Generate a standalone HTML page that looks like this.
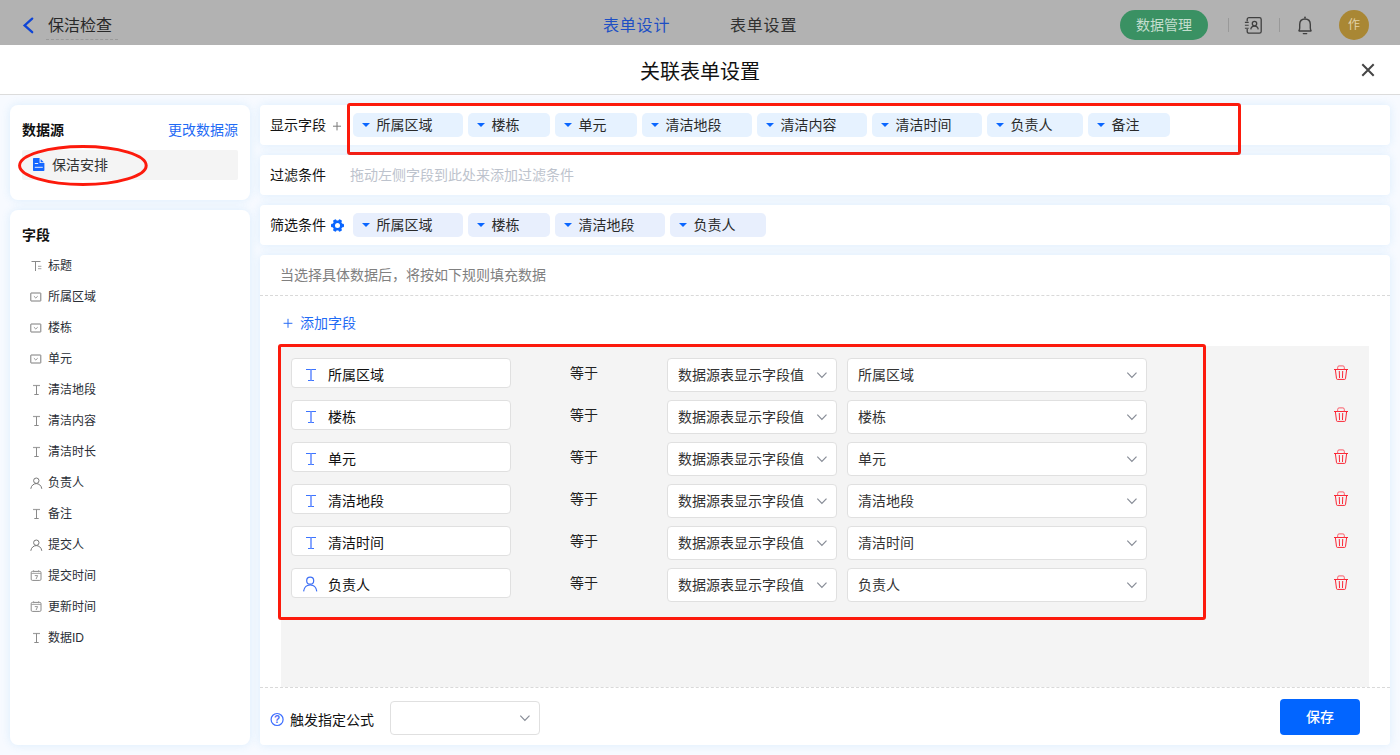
<!DOCTYPE html>
<html lang="zh-CN">
<head>
<meta charset="utf-8">
<title>关联表单设置</title>
<style>
*{box-sizing:border-box;margin:0;padding:0}
html,body{width:1400px;height:755px;overflow:hidden}
body{position:relative;background:#f7faff;font-family:"Liberation Sans", "Noto Sans CJK SC", sans-serif;font-size:14px;color:#141414;line-height:1}
.abs{position:absolute}
.t{position:absolute;white-space:nowrap;line-height:20px;height:20px}
#hdr{left:0;top:0;width:1400px;height:45px;background:#b2b2b2}
#ttl{left:0;top:45px;width:1400px;height:50px;background:#fff;border-bottom:1px solid #dcdcdc}
.card{position:absolute;background:#fff;border-radius:8px;box-shadow:0 0 10px rgba(47,157,235,0.14)}
.chip{position:absolute;height:24px;border-radius:5px;background:#e6f2ff;top:8px}
.chip.f{background:#e8effd}
.chip i{position:absolute;left:8.7px;top:10px;width:0;height:0;border-left:4.4px solid transparent;border-right:4.4px solid transparent;border-top:4.7px solid #0a66ff}
.chip span{position:absolute;left:23.6px;top:2px;line-height:20px;font-size:14px;color:#2a2a2a;white-space:nowrap}
.fi{position:absolute;left:48px;font-size:12px;line-height:16px;height:16px;color:#2a2e36;white-space:nowrap}
.ic{position:absolute;left:30px;width:13px;height:13px}
.box{position:absolute;background:#fff;border:1px solid #e0e0e0;border-radius:4px}
.box span{position:absolute;top:6px;line-height:20px;font-size:14px;color:#111;white-space:nowrap}
.sel span{top:6px;left:10px;color:#333}
.sel svg{position:absolute;right:8.5px;top:12.4px}
</style>
</head>
<body>
<div class="abs" id="hdr"></div>
<svg class="abs" style="left:21px;top:16px" width="14" height="18" viewBox="0 0 14 18"><path d="M11.2 2.6 L3.6 9.4 L11.2 16.2" fill="none" stroke="#0f45d6" stroke-width="2.3" stroke-linecap="round"/></svg>
<div class="t" style="left:48px;top:15px;font-size:16px;color:#292929;border-bottom:1px dashed #9a9a9a;height:25px;line-height:21px;padding-right:6px;margin-left:-2px;padding-left:2px">保洁检查</div>
<div class="t" style="left:603px;top:16px;font-size:16px;letter-spacing:0.8px;color:#1d4fc4">表单设计</div>
<div class="t" style="left:730px;top:16px;font-size:16px;letter-spacing:0.8px;color:#303030">表单设置</div>
<div class="abs" style="left:1120px;top:10px;width:88px;height:30px;border-radius:15px;background:#3a9163;color:#c4dece;font-size:14px;line-height:30px;text-align:center">数据管理</div>
<div class="abs" style="left:1228px;top:18px;width:1px;height:14px;background:#999"></div>
<div class="abs" style="left:1279px;top:18px;width:1px;height:14px;background:#999"></div>
<svg class="abs" style="left:1244px;top:16px" width="20" height="19" viewBox="0 0 20 19"><rect x="3.2" y="1.6" width="14" height="15.6" rx="1.8" fill="none" stroke="#404040" stroke-width="1.3"/><rect x="2" y="5.4" width="2.4" height="7.6" fill="#b2b2b2"/><circle cx="10.5" cy="7.6" r="2.2" fill="none" stroke="#404040" stroke-width="1.3"/><path d="M6.8 13.4 C7 10.9 9 10.2 10.5 10.2 C12 10.2 14 10.9 14.2 13.4" fill="none" stroke="#404040" stroke-width="1.3"/><path d="M0.9 6.4h3.8M0.9 9.3h3.8M0.9 12.2h3.8" stroke="#404040" stroke-width="1.1"/></svg>
<svg class="abs" style="left:1295px;top:15px" width="20" height="21" viewBox="0 0 20 21"><path d="M3.6 16 h12.8 M3.6 16 C4.6 15 4.7 14.4 4.7 13 V9.6 C4.7 5.8 7 4 10 4 C13 4 15.3 5.8 15.3 9.6 V13 C15.3 14.4 15.4 15 16.4 16" fill="none" stroke="#404040" stroke-width="1.4" stroke-linejoin="round"/><circle cx="10" cy="2.4" r="0.9" fill="#404040"/><path d="M8.3 18.6h3.4" stroke="#404040" stroke-width="1.3" stroke-linecap="round"/></svg>
<div class="abs" style="left:1339px;top:10px;width:30px;height:30px;border-radius:15px;background:#a98734;color:#e3d3a8;font-size:12px;line-height:30px;text-align:center">作</div>
<div class="abs" id="ttl"></div>
<div class="t" style="left:640px;top:59px;font-size:20px;line-height:26px;height:26px;color:#111">关联表单设置</div>
<svg class="abs" style="left:1359.5px;top:62px" width="16" height="16" viewBox="0 0 16 16"><path d="M2.3 2.3 L13.7 13.7 M13.7 2.3 L2.3 13.7" stroke="#454545" stroke-width="2" fill="none"/></svg>
<div class="card" style="left:10px;top:105px;width:240px;height:95px"></div>
<div class="t" style="left:22px;top:120px;font-weight:bold;color:#111">数据源</div>
<div class="t" style="left:168px;top:120px;color:#1f6bf5">更改数据源</div>
<div class="abs" style="left:22px;top:150px;width:216px;height:30px;background:#f4f4f4;border-radius:2px"></div>
<svg class="abs" style="left:33.2px;top:158px" width="12" height="13" viewBox="0 0 12 13"><path d="M0.8 0 H6.6 V5 H11.4 V12.2 Q11.4 13 10.6 13 H0.8 Q0 13 0 12.2 V0.8 Q0 0 0.8 0 Z" fill="#1466ff"/><path d="M7.6 1 L10.8 4.2 H7.6 Z" fill="#1466ff"/><path d="M1.8 5.5 H5.2 M1.8 9.3 H9.8" stroke="#e6eeff" stroke-width="1"/></svg>
<div class="t" style="left:52px;top:155px;color:#333">保洁安排</div>
<svg class="abs" style="left:15px;top:141px" width="136" height="48" viewBox="0 0 136 48"><ellipse cx="67.9" cy="24.5" rx="63.3" ry="19" fill="none" stroke="#fc1a0c" stroke-width="3"/></svg>
<div class="card" style="left:10px;top:210px;width:240px;height:535px"></div>
<div class="t" style="left:22px;top:225px;font-weight:bold;color:#111">字段</div>
<svg class="ic" style="top:259px" width="13" height="13" viewBox="0 0 13 13"><path d="M1.5 2.5h9M5.5 2.5v9.5" fill="none" stroke="#8a8a8a" stroke-width="1"/><path d="M8 7.3h3.4M8 9.7h3.4" fill="none" stroke="#9a9a9a" stroke-width="0.9"/></svg>
<div class="fi" style="top:258px">标题</div>
<svg class="ic" style="top:290px" width="13" height="13" viewBox="0 0 13 13"><rect x="0.8" y="3" width="10" height="8" rx="0.3" fill="none" stroke="#7d7d7d" stroke-width="1"/><path d="M3.9 6.2 L5.8 8 L7.7 6.2" fill="none" stroke="#8a8a8a" stroke-width="0.9"/></svg>
<div class="fi" style="top:289px">所属区域</div>
<svg class="ic" style="top:321px" width="13" height="13" viewBox="0 0 13 13"><rect x="0.8" y="3" width="10" height="8" rx="0.3" fill="none" stroke="#7d7d7d" stroke-width="1"/><path d="M3.9 6.2 L5.8 8 L7.7 6.2" fill="none" stroke="#8a8a8a" stroke-width="0.9"/></svg>
<div class="fi" style="top:320px">楼栋</div>
<svg class="ic" style="top:352px" width="13" height="13" viewBox="0 0 13 13"><rect x="0.8" y="3" width="10" height="8" rx="0.3" fill="none" stroke="#7d7d7d" stroke-width="1"/><path d="M3.9 6.2 L5.8 8 L7.7 6.2" fill="none" stroke="#8a8a8a" stroke-width="0.9"/></svg>
<div class="fi" style="top:351px">单元</div>
<svg class="ic" style="top:383px" width="13" height="13" viewBox="0 0 13 13"><path d="M3 2.5h7" fill="none" stroke="#a0a0a0" stroke-width="1.2"/><path d="M6.5 2.5v9M4.3 11.5h4.4" fill="none" stroke="#8a8a8a" stroke-width="1"/></svg>
<div class="fi" style="top:382px">清洁地段</div>
<svg class="ic" style="top:414px" width="13" height="13" viewBox="0 0 13 13"><path d="M3 2.5h7" fill="none" stroke="#a0a0a0" stroke-width="1.2"/><path d="M6.5 2.5v9M4.3 11.5h4.4" fill="none" stroke="#8a8a8a" stroke-width="1"/></svg>
<div class="fi" style="top:413px">清洁内容</div>
<svg class="ic" style="top:445px" width="13" height="13" viewBox="0 0 13 13"><path d="M3 2.5h7" fill="none" stroke="#a0a0a0" stroke-width="1.2"/><path d="M6.5 2.5v9M4.3 11.5h4.4" fill="none" stroke="#8a8a8a" stroke-width="1"/></svg>
<div class="fi" style="top:444px">清洁时长</div>
<svg class="ic" style="top:476px" width="13" height="13" viewBox="0 0 13 13"><circle cx="6.3" cy="4.7" r="2.7" fill="none" stroke="#777" stroke-width="1"/><path d="M0.8 12.8 C1.2 9.3 4 7.6 6.3 7.6 C8.6 7.6 11.4 9.3 11.8 12.8" fill="none" stroke="#777" stroke-width="1"/></svg>
<div class="fi" style="top:475px">负责人</div>
<svg class="ic" style="top:507px" width="13" height="13" viewBox="0 0 13 13"><path d="M3 2.5h7" fill="none" stroke="#a0a0a0" stroke-width="1.2"/><path d="M6.5 2.5v9M4.3 11.5h4.4" fill="none" stroke="#8a8a8a" stroke-width="1"/></svg>
<div class="fi" style="top:506px">备注</div>
<svg class="ic" style="top:538px" width="13" height="13" viewBox="0 0 13 13"><circle cx="6.3" cy="4.7" r="2.7" fill="none" stroke="#777" stroke-width="1"/><path d="M0.8 12.8 C1.2 9.3 4 7.6 6.3 7.6 C8.6 7.6 11.4 9.3 11.8 12.8" fill="none" stroke="#777" stroke-width="1"/></svg>
<div class="fi" style="top:537px">提交人</div>
<svg class="ic" style="top:569px" width="13" height="13" viewBox="0 0 13 13"><rect x="1.2" y="2.4" width="9.8" height="9" rx="1.2" fill="none" stroke="#8a8a8a" stroke-width="1"/><path d="M1.2 4.4h9.8M3.6 1.2v2M8.6 1.2v2" stroke="#9a9a9a" stroke-width="0.9"/><path d="M4.8 6.6h2.8l-1.5 3.4" fill="none" stroke="#8a8a8a" stroke-width="0.9"/></svg>
<div class="fi" style="top:568px">提交时间</div>
<svg class="ic" style="top:600px" width="13" height="13" viewBox="0 0 13 13"><rect x="1.2" y="2.4" width="9.8" height="9" rx="1.2" fill="none" stroke="#8a8a8a" stroke-width="1"/><path d="M1.2 4.4h9.8M3.6 1.2v2M8.6 1.2v2" stroke="#9a9a9a" stroke-width="0.9"/><path d="M4.8 6.6h2.8l-1.5 3.4" fill="none" stroke="#8a8a8a" stroke-width="0.9"/></svg>
<div class="fi" style="top:599px">更新时间</div>
<svg class="ic" style="top:631px" width="13" height="13" viewBox="0 0 13 13"><path d="M3 2.5h7" fill="none" stroke="#a0a0a0" stroke-width="1.2"/><path d="M6.5 2.5v9M4.3 11.5h4.4" fill="none" stroke="#8a8a8a" stroke-width="1"/></svg>
<div class="fi" style="top:630px">数据ID</div>
<div class="card" style="left:260px;top:105px;width:1130px;height:40px;border-radius:4px"></div>
<div class="t" style="left:270px;top:115px">显示字段</div>
<svg class="abs" style="left:332px;top:121px" width="10" height="10" viewBox="0 0 10 10"><path d="M5 1v8.4M1 5.2h8" stroke="#7a7a7a" stroke-width="1" fill="none"/></svg>
<div class="chip " style="left:353px;top:113px;width:110px"><i></i><span>所属区域</span></div><div class="chip " style="left:468px;top:113px;width:82px"><i></i><span>楼栋</span></div><div class="chip " style="left:555px;top:113px;width:82px"><i></i><span>单元</span></div><div class="chip " style="left:642px;top:113px;width:110px"><i></i><span>清洁地段</span></div><div class="chip " style="left:757px;top:113px;width:110px"><i></i><span>清洁内容</span></div><div class="chip " style="left:872px;top:113px;width:110px"><i></i><span>清洁时间</span></div><div class="chip " style="left:987px;top:113px;width:96px"><i></i><span>负责人</span></div><div class="chip " style="left:1088px;top:113px;width:82px"><i></i><span>备注</span></div>
<div class="abs" style="left:347px;top:103px;width:894px;height:52px;border:3px solid #fc1a0c;border-radius:3px"></div>
<div class="card" style="left:260px;top:155px;width:1130px;height:40px;border-radius:4px"></div>
<div class="t" style="left:270px;top:165px">过滤条件</div>
<div class="t" style="left:350px;top:165px;color:#bdc3cd">拖动左侧字段到此处来添加过滤条件</div>
<div class="card" style="left:260px;top:205px;width:1130px;height:40px;border-radius:4px"></div>
<div class="t" style="left:270px;top:215px">筛选条件</div>
<svg class="abs" style="left:330px;top:217.5px" width="15" height="15" viewBox="0 0 15 15"><g fill="#0a66ff"><circle cx="7.5" cy="7.5" r="5"/><rect x="5.8" y="1" width="3.4" height="13" rx="0.9" transform="rotate(90 7.5 7.5)"/><rect x="5.8" y="1" width="3.4" height="13" rx="0.9" transform="rotate(30 7.5 7.5)"/><rect x="5.8" y="1" width="3.4" height="13" rx="0.9" transform="rotate(150 7.5 7.5)"/></g><circle cx="7.5" cy="7.5" r="2.5" fill="#fff"/></svg>
<div class="chip f" style="left:353px;top:213px;width:110px"><i></i><span>所属区域</span></div><div class="chip f" style="left:468px;top:213px;width:82px"><i></i><span>楼栋</span></div><div class="chip f" style="left:555px;top:213px;width:110px"><i></i><span>清洁地段</span></div><div class="chip f" style="left:670px;top:213px;width:96px"><i></i><span>负责人</span></div>
<div class="card" style="left:260px;top:255px;width:1130px;height:490px;border-radius:4px"></div>
<div class="t" style="left:280px;top:265px;color:#808080">当选择具体数据后，将按如下规则填充数据</div>
<div class="abs" style="left:260px;top:295px;width:1130px;height:0;border-top:1px dashed #d9d9d9"></div>
<svg class="abs" style="left:283px;top:318px" width="11" height="11" viewBox="0 0 11 11"><path d="M5 0.8v9M0.6 5.3h8.8" stroke="#2a6df4" stroke-width="1" fill="none"/></svg>
<div class="t" style="left:300px;top:313px;color:#1f6bf5">添加字段</div>
<div class="abs" style="left:281px;top:346px;width:1088px;height:341px;background:#f4f4f4"></div>
<div class="abs" style="left:260px;top:687px;width:1130px;height:0;border-top:1px dashed #d9d9d9"></div>
<div class="box" style="left:291px;top:358px;width:220px;height:30px"><svg class="abs" style="left:12px;top:9px" width="14" height="14" viewBox="0 0 14 14"><path d="M2 1.5h10M4 12.5h6" fill="none" stroke="#3b74ff" stroke-width="1.1"/><path d="M7 1.5v11" fill="none" stroke="#7a9cff" stroke-width="1.8"/></svg><span style="left:36px;top:6px">所属区域</span></div>
<div class="t" style="left:570px;top:363px;color:#222">等于</div>
<div class="box sel" style="left:667px;top:358px;width:170px;height:34px"><span>数据源表显示字段值</span><svg width="12" height="8" viewBox="0 0 12 8"><path d="M1.3 1.6 L5.9 6.3 L10.5 1.6" fill="none" stroke="#878c96" stroke-width="1.2"/></svg></div>
<div class="box sel" style="left:847px;top:358px;width:300px;height:34px"><span>所属区域</span><svg width="12" height="8" viewBox="0 0 12 8"><path d="M1.3 1.6 L5.9 6.3 L10.5 1.6" fill="none" stroke="#878c96" stroke-width="1.2"/></svg></div>
<svg class="abs" style="left:1334px;top:365px" width="14" height="16" viewBox="0 0 14 16"><g fill="none" stroke="#fb2635" stroke-width="1"><path d="M0 4.5h14"/><path d="M3.7 4.4 V2.3 Q3.7 0.9 5.1 0.9 H8.9 Q10.3 0.9 10.3 2.3 V4.4" stroke="#fb5a66"/><path d="M1.4 4.8 L2.5 13.6 Q2.6 14.4 3.4 14.4 H10.6 Q11.4 14.4 11.5 13.6 L12.6 4.8"/><path d="M5.3 6.4 L5.5 12.6 M8.7 6.4 L8.5 12.6" stroke-linecap="round"/></g></svg>
<div class="box" style="left:291px;top:400px;width:220px;height:30px"><svg class="abs" style="left:12px;top:9px" width="14" height="14" viewBox="0 0 14 14"><path d="M2 1.5h10M4 12.5h6" fill="none" stroke="#3b74ff" stroke-width="1.1"/><path d="M7 1.5v11" fill="none" stroke="#7a9cff" stroke-width="1.8"/></svg><span style="left:36px;top:6px">楼栋</span></div>
<div class="t" style="left:570px;top:405px;color:#222">等于</div>
<div class="box sel" style="left:667px;top:400px;width:170px;height:34px"><span>数据源表显示字段值</span><svg width="12" height="8" viewBox="0 0 12 8"><path d="M1.3 1.6 L5.9 6.3 L10.5 1.6" fill="none" stroke="#878c96" stroke-width="1.2"/></svg></div>
<div class="box sel" style="left:847px;top:400px;width:300px;height:34px"><span>楼栋</span><svg width="12" height="8" viewBox="0 0 12 8"><path d="M1.3 1.6 L5.9 6.3 L10.5 1.6" fill="none" stroke="#878c96" stroke-width="1.2"/></svg></div>
<svg class="abs" style="left:1334px;top:407px" width="14" height="16" viewBox="0 0 14 16"><g fill="none" stroke="#fb2635" stroke-width="1"><path d="M0 4.5h14"/><path d="M3.7 4.4 V2.3 Q3.7 0.9 5.1 0.9 H8.9 Q10.3 0.9 10.3 2.3 V4.4" stroke="#fb5a66"/><path d="M1.4 4.8 L2.5 13.6 Q2.6 14.4 3.4 14.4 H10.6 Q11.4 14.4 11.5 13.6 L12.6 4.8"/><path d="M5.3 6.4 L5.5 12.6 M8.7 6.4 L8.5 12.6" stroke-linecap="round"/></g></svg>
<div class="box" style="left:291px;top:442px;width:220px;height:30px"><svg class="abs" style="left:12px;top:9px" width="14" height="14" viewBox="0 0 14 14"><path d="M2 1.5h10M4 12.5h6" fill="none" stroke="#3b74ff" stroke-width="1.1"/><path d="M7 1.5v11" fill="none" stroke="#7a9cff" stroke-width="1.8"/></svg><span style="left:36px;top:6px">单元</span></div>
<div class="t" style="left:570px;top:447px;color:#222">等于</div>
<div class="box sel" style="left:667px;top:442px;width:170px;height:34px"><span>数据源表显示字段值</span><svg width="12" height="8" viewBox="0 0 12 8"><path d="M1.3 1.6 L5.9 6.3 L10.5 1.6" fill="none" stroke="#878c96" stroke-width="1.2"/></svg></div>
<div class="box sel" style="left:847px;top:442px;width:300px;height:34px"><span>单元</span><svg width="12" height="8" viewBox="0 0 12 8"><path d="M1.3 1.6 L5.9 6.3 L10.5 1.6" fill="none" stroke="#878c96" stroke-width="1.2"/></svg></div>
<svg class="abs" style="left:1334px;top:449px" width="14" height="16" viewBox="0 0 14 16"><g fill="none" stroke="#fb2635" stroke-width="1"><path d="M0 4.5h14"/><path d="M3.7 4.4 V2.3 Q3.7 0.9 5.1 0.9 H8.9 Q10.3 0.9 10.3 2.3 V4.4" stroke="#fb5a66"/><path d="M1.4 4.8 L2.5 13.6 Q2.6 14.4 3.4 14.4 H10.6 Q11.4 14.4 11.5 13.6 L12.6 4.8"/><path d="M5.3 6.4 L5.5 12.6 M8.7 6.4 L8.5 12.6" stroke-linecap="round"/></g></svg>
<div class="box" style="left:291px;top:484px;width:220px;height:30px"><svg class="abs" style="left:12px;top:9px" width="14" height="14" viewBox="0 0 14 14"><path d="M2 1.5h10M4 12.5h6" fill="none" stroke="#3b74ff" stroke-width="1.1"/><path d="M7 1.5v11" fill="none" stroke="#7a9cff" stroke-width="1.8"/></svg><span style="left:36px;top:6px">清洁地段</span></div>
<div class="t" style="left:570px;top:489px;color:#222">等于</div>
<div class="box sel" style="left:667px;top:484px;width:170px;height:34px"><span>数据源表显示字段值</span><svg width="12" height="8" viewBox="0 0 12 8"><path d="M1.3 1.6 L5.9 6.3 L10.5 1.6" fill="none" stroke="#878c96" stroke-width="1.2"/></svg></div>
<div class="box sel" style="left:847px;top:484px;width:300px;height:34px"><span>清洁地段</span><svg width="12" height="8" viewBox="0 0 12 8"><path d="M1.3 1.6 L5.9 6.3 L10.5 1.6" fill="none" stroke="#878c96" stroke-width="1.2"/></svg></div>
<svg class="abs" style="left:1334px;top:491px" width="14" height="16" viewBox="0 0 14 16"><g fill="none" stroke="#fb2635" stroke-width="1"><path d="M0 4.5h14"/><path d="M3.7 4.4 V2.3 Q3.7 0.9 5.1 0.9 H8.9 Q10.3 0.9 10.3 2.3 V4.4" stroke="#fb5a66"/><path d="M1.4 4.8 L2.5 13.6 Q2.6 14.4 3.4 14.4 H10.6 Q11.4 14.4 11.5 13.6 L12.6 4.8"/><path d="M5.3 6.4 L5.5 12.6 M8.7 6.4 L8.5 12.6" stroke-linecap="round"/></g></svg>
<div class="box" style="left:291px;top:526px;width:220px;height:30px"><svg class="abs" style="left:12px;top:9px" width="14" height="14" viewBox="0 0 14 14"><path d="M2 1.5h10M4 12.5h6" fill="none" stroke="#3b74ff" stroke-width="1.1"/><path d="M7 1.5v11" fill="none" stroke="#7a9cff" stroke-width="1.8"/></svg><span style="left:36px;top:6px">清洁时间</span></div>
<div class="t" style="left:570px;top:531px;color:#222">等于</div>
<div class="box sel" style="left:667px;top:526px;width:170px;height:34px"><span>数据源表显示字段值</span><svg width="12" height="8" viewBox="0 0 12 8"><path d="M1.3 1.6 L5.9 6.3 L10.5 1.6" fill="none" stroke="#878c96" stroke-width="1.2"/></svg></div>
<div class="box sel" style="left:847px;top:526px;width:300px;height:34px"><span>清洁时间</span><svg width="12" height="8" viewBox="0 0 12 8"><path d="M1.3 1.6 L5.9 6.3 L10.5 1.6" fill="none" stroke="#878c96" stroke-width="1.2"/></svg></div>
<svg class="abs" style="left:1334px;top:533px" width="14" height="16" viewBox="0 0 14 16"><g fill="none" stroke="#fb2635" stroke-width="1"><path d="M0 4.5h14"/><path d="M3.7 4.4 V2.3 Q3.7 0.9 5.1 0.9 H8.9 Q10.3 0.9 10.3 2.3 V4.4" stroke="#fb5a66"/><path d="M1.4 4.8 L2.5 13.6 Q2.6 14.4 3.4 14.4 H10.6 Q11.4 14.4 11.5 13.6 L12.6 4.8"/><path d="M5.3 6.4 L5.5 12.6 M8.7 6.4 L8.5 12.6" stroke-linecap="round"/></g></svg>
<div class="box" style="left:291px;top:568px;width:220px;height:30px"><svg class="abs" style="left:10px;top:6px" width="17" height="17" viewBox="0 0 17 17"><circle cx="8.2" cy="5.7" r="3.5" fill="none" stroke="#3d6ff5" stroke-width="1.2"/><path d="M1.6 16.4 C2 12 5.2 9.8 8.2 9.8 C11.2 9.8 14.4 12 14.8 16.4" fill="none" stroke="#3d6ff5" stroke-width="1.2"/></svg><span style="left:36px;top:6px">负责人</span></div>
<div class="t" style="left:570px;top:573px;color:#222">等于</div>
<div class="box sel" style="left:667px;top:568px;width:170px;height:34px"><span>数据源表显示字段值</span><svg width="12" height="8" viewBox="0 0 12 8"><path d="M1.3 1.6 L5.9 6.3 L10.5 1.6" fill="none" stroke="#878c96" stroke-width="1.2"/></svg></div>
<div class="box sel" style="left:847px;top:568px;width:300px;height:34px"><span>负责人</span><svg width="12" height="8" viewBox="0 0 12 8"><path d="M1.3 1.6 L5.9 6.3 L10.5 1.6" fill="none" stroke="#878c96" stroke-width="1.2"/></svg></div>
<svg class="abs" style="left:1334px;top:575px" width="14" height="16" viewBox="0 0 14 16"><g fill="none" stroke="#fb2635" stroke-width="1"><path d="M0 4.5h14"/><path d="M3.7 4.4 V2.3 Q3.7 0.9 5.1 0.9 H8.9 Q10.3 0.9 10.3 2.3 V4.4" stroke="#fb5a66"/><path d="M1.4 4.8 L2.5 13.6 Q2.6 14.4 3.4 14.4 H10.6 Q11.4 14.4 11.5 13.6 L12.6 4.8"/><path d="M5.3 6.4 L5.5 12.6 M8.7 6.4 L8.5 12.6" stroke-linecap="round"/></g></svg>
<div class="abs" style="left:278px;top:344px;width:928px;height:276px;border:3px solid #fc1a0c;border-radius:3px"></div>
<svg class="abs" style="left:270px;top:712px" width="15" height="15" viewBox="0 0 15 15"><circle cx="7.1" cy="7.5" r="6" fill="none" stroke="#3b6dff" stroke-width="1.2"/><text x="7.1" y="11" font-size="10" font-weight="bold" text-anchor="middle" fill="#4a6cf5" font-family='"Liberation Sans",sans-serif'>?</text></svg>
<div class="t" style="left:290px;top:710px;color:#111">触发指定公式</div>
<div class="box sel" style="left:390px;top:701px;width:150px;height:34px"><svg width="12" height="8" viewBox="0 0 12 8"><path d="M1.3 1.6 L5.9 6.3 L10.5 1.6" fill="none" stroke="#878c96" stroke-width="1.2"/></svg></div>
<div class="abs" style="left:1280px;top:699px;width:80px;height:36px;border-radius:4px;background:#0265ff;color:#fff;font-size:14px;line-height:36px;text-align:center;font-weight:500">保存</div>
</body>
</html>
